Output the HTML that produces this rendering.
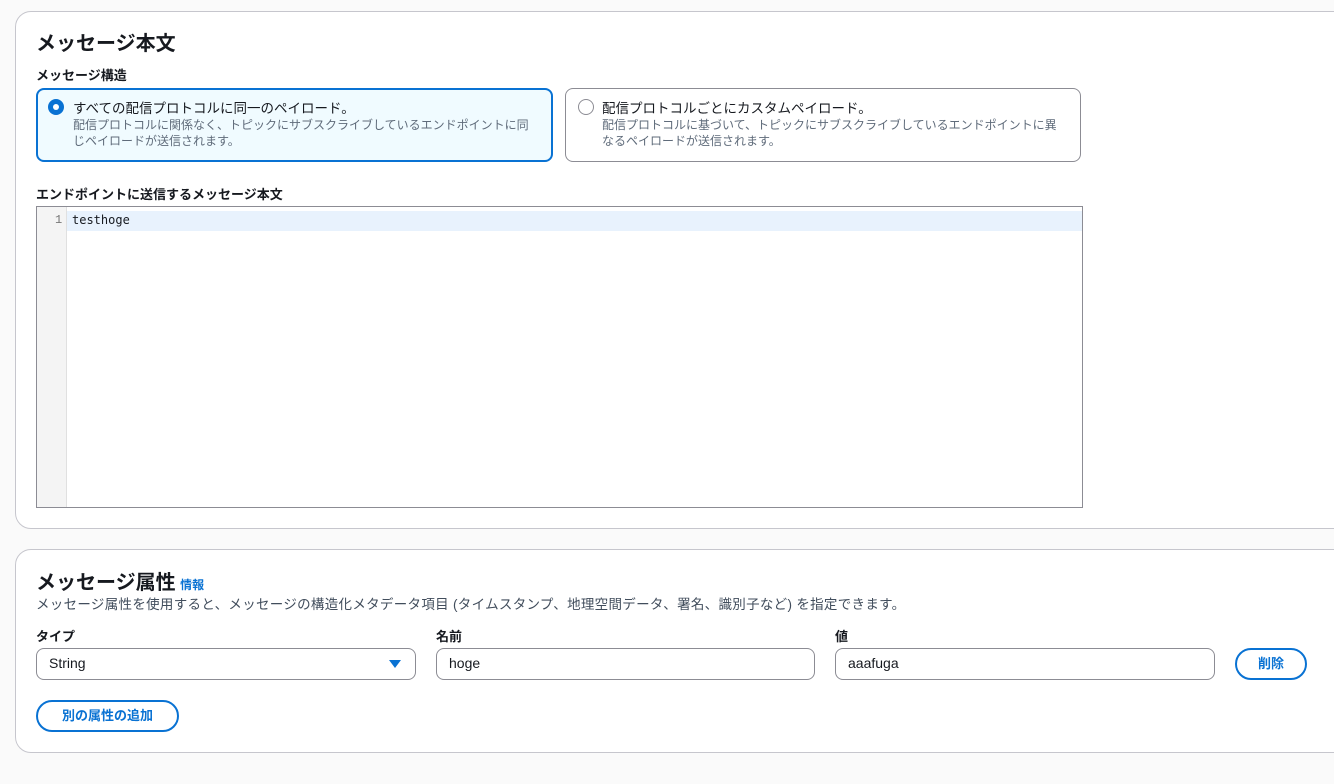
<!DOCTYPE html>
<html><head><meta charset="utf-8"><style>
*{box-sizing:border-box}
body{margin:0;width:1334px;height:784px;background:#fafafa;font-family:"Liberation Sans","Noto Sans CJK JP",sans-serif;color:#16191f;position:relative;overflow:hidden}
.panel{position:absolute;left:15px;width:1340px;background:#fff;border:1px solid #c6c6cd;border-radius:16px}
.abs{position:absolute;white-space:nowrap}
h2{margin:0;font-size:20px;font-weight:bold}
.lbl{font-size:13px;font-weight:bold}
.tile{position:absolute;border-radius:8px}
.t1{font-size:13.5px}
.t2{font-size:12px;color:#5f6b7a;line-height:16px;white-space:normal}
.inp{position:absolute;height:32px;border:1px solid #8c8c94;border-radius:8px;font-size:14px;padding:6px 12px}
.btn{position:absolute;height:32px;border:2px solid #0972d3;border-radius:16px;color:#0972d3;font-size:13px;font-weight:bold;text-align:center;line-height:28px}
</style></head><body>
<div class="panel" style="top:11px;height:518px"></div>
<div class="abs" style="left:36px;top:27px"><h2>メッセージ本文</h2></div>
<div class="abs lbl" style="left:36px;top:65px">メッセージ構造</div>
<div class="tile" style="left:36px;top:88px;width:517px;height:74px;border:2px solid #0972d3;background:#f0fbff"></div>
<div class="abs" style="left:48px;top:99px;width:16px;height:16px;border-radius:50%;background:#0972d3"><div style="position:absolute;left:5px;top:5px;width:6px;height:6px;background:#fff;border-radius:50%"></div></div>
<div class="abs t1" style="left:73px;top:97px">すべての配信プロトコルに同一のペイロード。</div>
<div class="abs t2" style="left:73px;top:117px;width:462px">配信プロトコルに関係なく、トピックにサブスクライブしているエンドポイントに同じペイロードが送信されます。</div>
<div class="tile" style="left:565px;top:88px;width:516px;height:74px;border:1px solid #8c8c94;background:#fff"></div>
<div class="abs" style="left:578px;top:99px;width:16px;height:16px;border-radius:50%;border:1px solid #8c8c94"></div>
<div class="abs t1" style="left:602px;top:97px">配信プロトコルごとにカスタムペイロード。</div>
<div class="abs t2" style="left:602px;top:117px;width:462px">配信プロトコルに基づいて、トピックにサブスクライブしているエンドポイントに異なるペイロードが送信されます。</div>
<div class="abs lbl" style="left:36px;top:184px">エンドポイントに送信するメッセージ本文</div>
<div class="abs" style="left:36px;top:206px;width:1047px;height:302px;border:1px solid #8c8c94;background:#fff">
<div style="position:absolute;left:0;top:0;width:30px;height:100%;background:#f4f4f4;border-right:1px solid #e0e0e0"></div>
<div style="position:absolute;left:30px;top:4px;right:0;height:20px;background:#e8f2fd"></div>
<div style="position:absolute;left:18px;top:6px;font-family:'Liberation Mono',monospace;font-size:12px;color:#777">1</div>
<div style="position:absolute;left:35px;top:6px;font-family:'DejaVu Sans Mono',monospace;font-size:12px;color:#16191f">testhoge</div>
</div>
<div class="panel" style="top:549px;height:204px"></div>
<div class="abs" style="left:36px;top:566px"><h2 style="display:inline">メッセージ属性</h2> <span style="font-size:12px;color:#0972d3;font-weight:bold">情報</span></div>
<div class="abs" style="left:36px;top:593px;font-size:13.5px;letter-spacing:0.3px;color:#414d5c">メッセージ属性を使用すると、メッセージの構造化メタデータ項目 (タイムスタンプ、地理空間データ、署名、識別子など) を指定できます。</div>
<div class="abs lbl" style="left:36px;top:626px">タイプ</div>
<div class="abs lbl" style="left:436px;top:626px">名前</div>
<div class="abs lbl" style="left:835px;top:626px">値</div>
<div class="inp" style="left:36px;top:648px;width:380px">String<span style="position:absolute;right:14px;top:11px;width:0;height:0;border-left:6px solid transparent;border-right:6px solid transparent;border-top:8px solid #0972d3"></span></div>
<div class="inp" style="left:436px;top:648px;width:379px">hoge</div>
<div class="inp" style="left:835px;top:648px;width:380px">aaafuga</div>
<div class="btn" style="left:1235px;top:648px;width:72px">削除</div>
<div class="btn" style="left:36px;top:700px;width:143px">別の属性の追加</div>
</body></html>
